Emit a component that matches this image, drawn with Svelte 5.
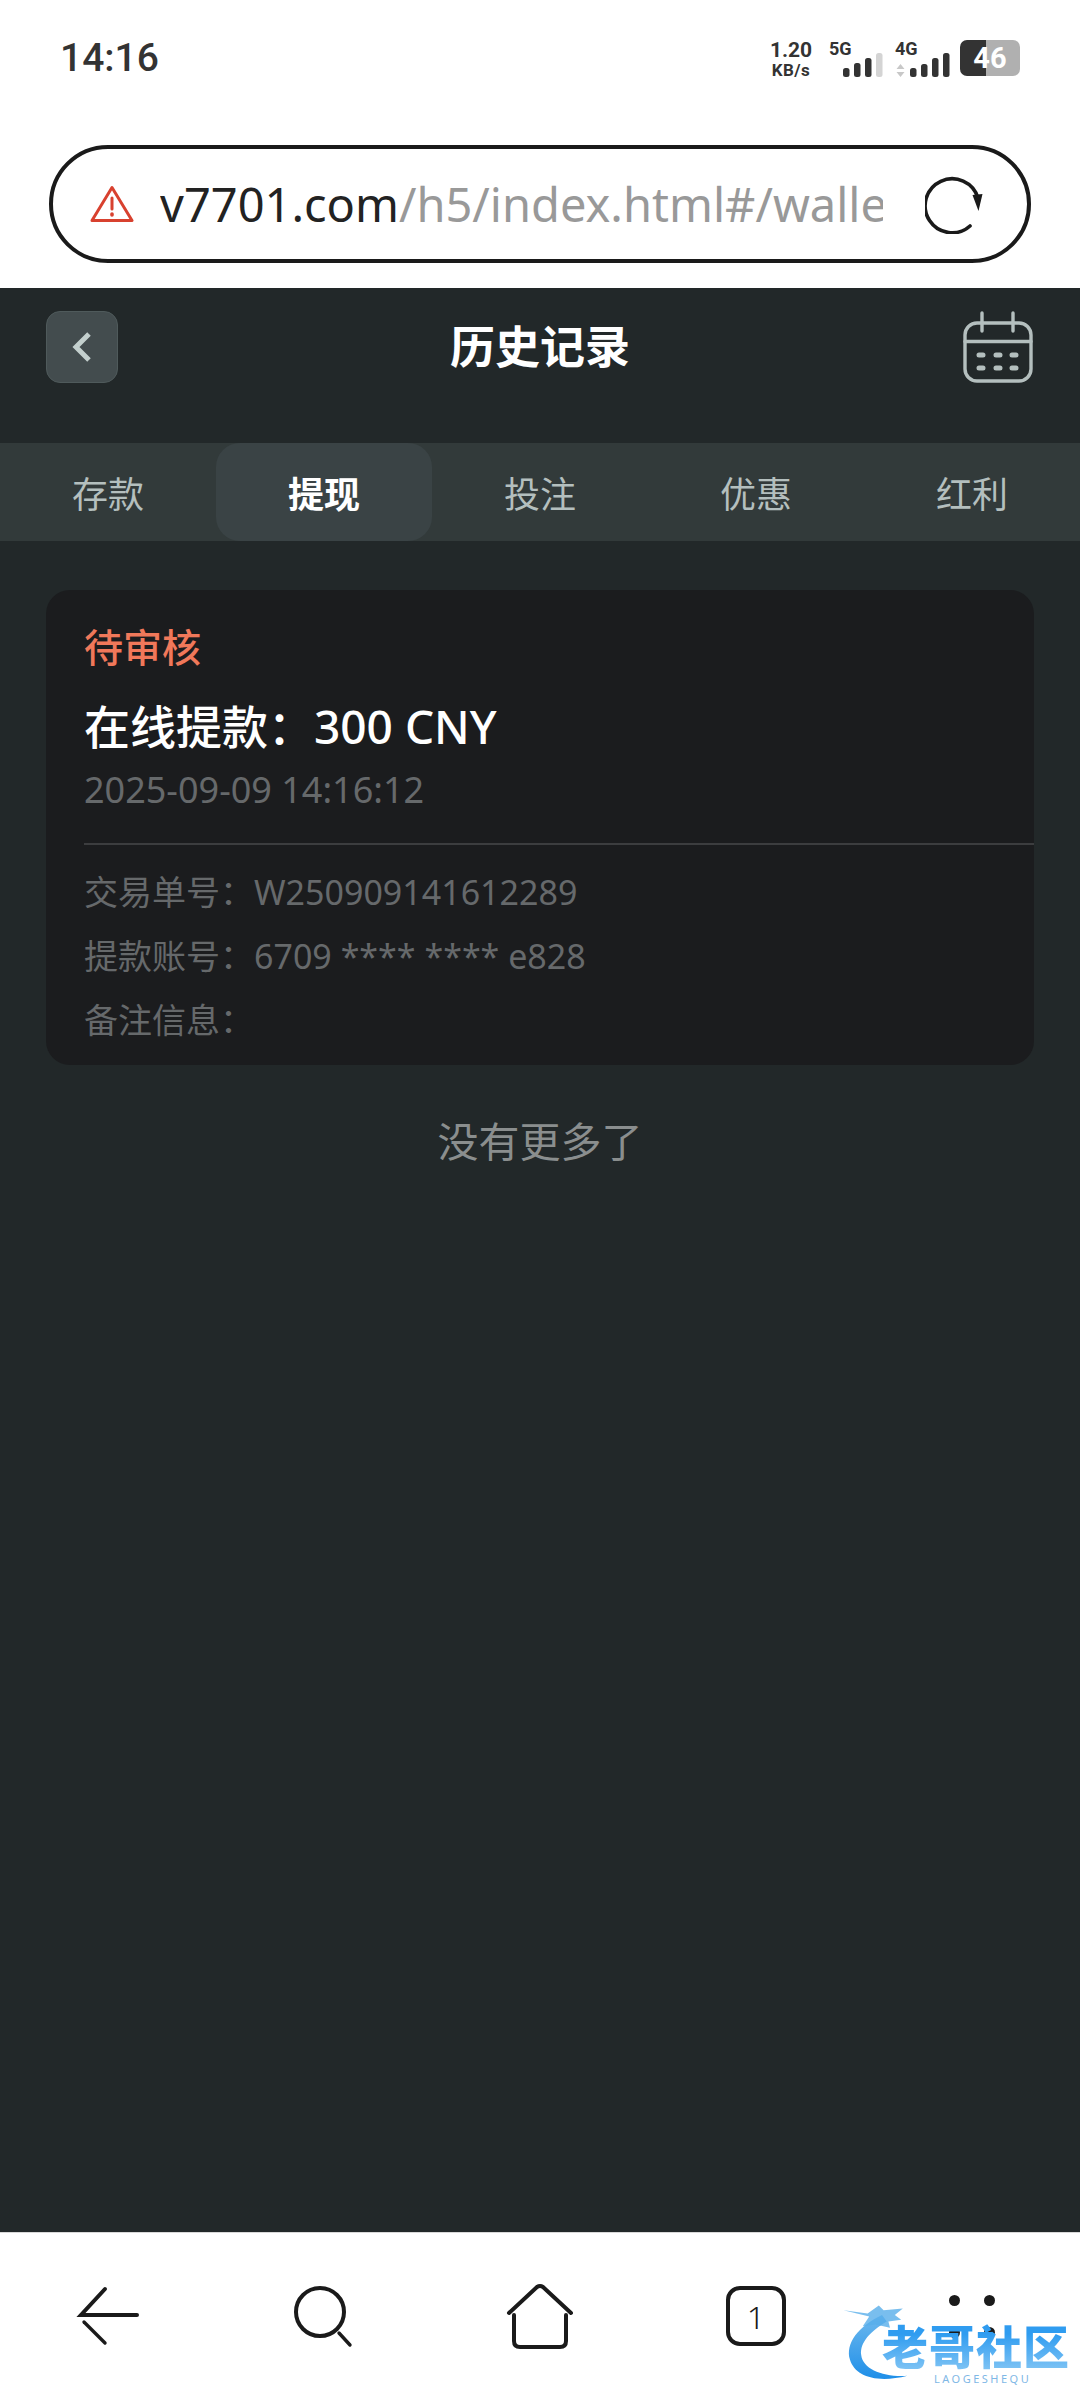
<script>
  const tabs = ["存款", "提现", "投注", "优惠", "红利"];
  const active = 1;
  const rows = [
    { label: "交易单号：", value: "W250909141612289" },
    { label: "提款账号：", value: "6709 **** **** e828" },
    { label: "备注信息：", value: "" },
  ];
  const sim5 = [
    { x: 0, h: 9, on: true },
    { x: 11, h: 14, on: true },
    { x: 22, h: 19, on: true },
    { x: 33, h: 24, on: false },
  ];
  const sim4 = [
    { x: 0, h: 9, on: true },
    { x: 11, h: 13, on: true },
    { x: 22, h: 19, on: true },
    { x: 33, h: 24, on: true },
  ];
</script>

<div class="page">
  <div class="status">
    <span class="time">14:16</span>
    <div class="status-right">
      <div class="speed"><span>1.20</span><span class="unit">KB/s</span></div>
      <div class="sim sim-5">
        <span class="net">5G</span>
        <svg class="bars" viewBox="0 0 40 24" width="40" height="24" aria-hidden="true">
          {#each sim5 as b}
            <rect x={b.x} y={24 - b.h} width="6.5" height={b.h} rx="2.5" fill={b.on ? "#333" : "#d4d4d4"} />
          {/each}
        </svg>
      </div>
      <div class="sim sim-4">
        <span class="net">4G</span>
        <div class="sim-line">
          <svg viewBox="0 0 9 13" width="9" height="13" aria-hidden="true">
            <path d="M4.5 0L8.5 5H.5zM4.5 13L.5 8h8z" fill="#c8c8c8" />
          </svg>
          <svg viewBox="0 0 40 24" width="40" height="24" aria-hidden="true">
            {#each sim4 as b}
              <rect x={b.x} y={24 - b.h} width="6.5" height={b.h} rx="2.5" fill="#333" />
            {/each}
          </svg>
        </div>
      </div>
      <div class="battery"><span>46</span></div>
    </div>
  </div>

  <div class="url-wrap">
    <div class="url">
      <svg class="warn" viewBox="0 0 44 38" width="44" height="38" fill="none" stroke="#d8412f" stroke-width="3" stroke-linejoin="round" stroke-linecap="round" aria-hidden="true">
        <path d="M22 2.5L42 35.5H2z" />
        <path d="M22 13v11" />
        <path d="M22 29v1" stroke-width="3.6" />
      </svg>
      <div class="url-text"><span class="host">v7701.com</span>/h5/index.html#/wallet/history</div>
      <svg class="reload" viewBox="0 0 60 60" width="60" height="60" fill="none" aria-hidden="true">
        <path d="M45 52A27 27 0 1 1 53 24" stroke="#1a1a1a" stroke-width="3.6" stroke-linecap="round" />
        <path d="M57.5 20L53.5 37L47.5 21z" fill="#1a1a1a" />
      </svg>
    </div>
  </div>

  <main class="app">
    <header class="head">
      <button class="back" type="button" aria-label="返回">
        <svg viewBox="0 0 22 32" width="22" height="32" fill="none" stroke="#c3cfcd" stroke-width="5" aria-hidden="true">
          <path d="M18 3L5 16l13 13" />
        </svg>
      </button>
      <h1>历史记录</h1>
      <svg class="cal" viewBox="0 0 72 72" width="72" height="72" fill="none" stroke="#b4bfbe" stroke-width="3.4" stroke-linecap="round" aria-hidden="true">
        <rect x="3" y="12" width="66" height="58" rx="12" />
        <path d="M3 30.500h66M20 2v18M51 2v18" />
        <g stroke-width="5">
          <path d="M17 44h4M34 44h4M50 44h4M17 57h4M34 57h4M50 57h4" />
        </g>
      </svg>
    </header>

    <nav class="tabs">
      {#each tabs as t, i}
        <div class="tab" class:active={i === active}>{t}</div>
      {/each}
    </nav>

    <div class="list">
      <section class="card">
        <div class="state">待审核</div>
        <div class="amount">在线提款：300 CNY</div>
        <div class="date">2025-09-09 14:16:12</div>
        <div class="rows">
          {#each rows as r}
            <div class="row">{r.label}{r.value}</div>
          {/each}
        </div>
      </section>
      <p class="end">没有更多了</p>
    </div>
  </main>

  <footer class="bottom">
    <svg viewBox="0 0 64 64" width="64" height="64" fill="none" stroke="#1a1a1a" stroke-width="4" stroke-linecap="round" aria-hidden="true">
      <path d="M29 5L5 31h56" />
      <path d="M8 38l21 21" stroke-width="3.4" />
    </svg>
    <svg viewBox="0 0 64 64" width="64" height="64" fill="none" stroke="#1a1a1a" stroke-width="4" stroke-linecap="round" aria-hidden="true">
      <circle cx="28" cy="28" r="24" />
      <path d="M47 49l11 12" stroke-width="3.4" />
    </svg>
    <svg viewBox="0 0 68 68" width="68" height="68" fill="none" stroke="#1a1a1a" stroke-width="4" stroke-linecap="round" stroke-linejoin="round" aria-hidden="true">
      <path d="M3 31L31 5q3-2 6 0l28 26" />
      <path d="M8 33v26q0 6 6 6h40q6 0 6-6V33" />
    </svg>
    <div class="tab-count"><span>1</span></div>
    <div class="more" aria-hidden="true"><i></i><i></i><i></i><i></i></div>
  </footer>

  <div class="mark" aria-hidden="true">
    <svg viewBox="0 0 120 112" width="120" height="112" fill="none">
      <defs>
        <linearGradient id="drg" x1="0" y1="0" x2="0" y2="1">
          <stop offset="0" stop-color="#6fb9ee" />
          <stop offset="1" stop-color="#1f8fe8" />
        </linearGradient>
      </defs>
      <path d="M50 16C20 30 4 52 10 72c6 20 32 30 72 20C52 94 26 84 24 66 22 50 36 36 56 24z" fill="url(#drg)" />
      <path d="M2 10l30 4 14-10 6 6 24-2-10 8 8 6-16 2 2 8-18-4-16 2 8-12z" fill="#58aeea" opacity=".8" />
    </svg>
    <div class="mark-name">老哥社区</div>
    <div class="mark-sub">LAOGESHEQU</div>
  </div>
</div>

<style>
  :global(body) {
    margin: 0;
    background: #fff;
  }

  .page {
    position: relative;
    display: flex;
    flex-direction: column;
    width: 1080px;
    height: 2400px;
    overflow: hidden;
    font-family: "Noto Sans", "Noto Sans CJK SC", sans-serif;
  }

  .status {
    display: flex;
    align-items: center;
    justify-content: space-between;
    height: 116px;
    padding: 0 60px;
    box-sizing: border-box;
    padding-right: 60px;
    color: #333;
  }

  .time {
    font-family: Roboto, sans-serif;
    font-size: 39px;
    font-weight: 500;
    letter-spacing: 0;
  }

  .status-right {
    display: flex;
    align-items: flex-start;
    height: 37px;
  }

  .speed {
    display: flex;
    flex-direction: column;
    align-items: center;
    width: 44px;
    font-family: Roboto, sans-serif;
    font-size: 21px;
    font-weight: 700;
    line-height: 21px;
  }

  .speed .unit {
    font-size: 17px;
    line-height: 19px;
    letter-spacing: 0.5px;
  }

  .sim {
    position: relative;
    height: 36px;
  }

  .net {
    position: absolute;
    left: 0;
    top: 0;
    font-family: Roboto, sans-serif;
    font-size: 18px;
    font-weight: 700;
    line-height: 18px;
  }

  .sim-5 {
    width: 55px;
    margin-left: 16px;
  }

  .sim-5 .bars {
    position: absolute;
    left: 14px;
    bottom: -1px;
  }

  .sim-4 {
    width: 54px;
    margin-left: 11px;
  }

  .sim-line {
    position: absolute;
    left: 1px;
    bottom: -1px;
    display: flex;
    align-items: flex-end;
    gap: 5px;
  }

  .battery {
    display: flex;
    align-items: center;
    justify-content: center;
    width: 60px;
    height: 36px;
    margin-left: 11px;
    border-radius: 7px;
    background: linear-gradient(90deg, #333 0 43%, #b0b0b0 43%);
    color: #fff;
    font-family: Roboto, sans-serif;
    font-size: 29px;
    font-weight: 700;
  }

  .url-wrap {
    padding: 29px 49px 25px;
  }

  .url {
    display: flex;
    align-items: center;
    height: 118px;
    box-sizing: border-box;
    padding: 0 42px 0 37px;
    border: 4px solid #1a1a1a;
    border-radius: 59px;
  }

  .warn {
    flex: none;
    margin-right: 26px;
  }

  .url-text {
    flex: 1;
    overflow: hidden;
    white-space: nowrap;
    color: #999;
    font-size: 47px;
    line-height: 60px;
  }

  .host {
    color: #222;
  }

  .reload {
    flex: none;
    margin-left: 42px;
  }

  .app {
    flex: 1;
    min-height: 0;
    background: #222829;
  }

  .head {
    display: flex;
    align-items: center;
    justify-content: space-between;
    height: 155px;
    box-sizing: border-box;
    padding: 0 46px 38px;
  }

  .back {
    display: flex;
    align-items: center;
    justify-content: center;
    width: 72px;
    height: 72px;
    padding: 0;
    border: 1px solid #4f5a5b;
    border-radius: 14px;
    background: #434c4e;
  }

  h1 {
    margin: 0;
    color: #fff;
    font-size: 45px;
    font-weight: 700;
    line-height: 60px;
  }

  .cal {
    flex: none;
  }

  .tabs {
    display: grid;
    grid-template-columns: repeat(5, 216px);
    height: 98px;
    background: #323a3a;
  }

  .tab {
    display: flex;
    align-items: center;
    justify-content: center;
    border-radius: 24px;
    color: #b4bfbe;
    font-size: 36px;
  }

  .tab.active {
    background: #3a4345;
    color: #fff;
    font-weight: 700;
  }

  .list {
    padding: 49px 46px 0;
  }

  .card {
    height: 475px;
    box-sizing: border-box;
    padding: 30px 0 0 38px;
    border-radius: 24px;
    background: #1b1c1e;
  }

  .state {
    color: #f0785a;
    font-size: 39px;
    font-weight: 500;
    line-height: 54px;
  }

  .amount {
    margin-top: 22px;
    color: #fff;
    font-size: 46px;
    font-weight: 500;
    line-height: 60px;
  }

  .date {
    margin-top: 10px;
    color: #66696b;
    font-size: 36px;
    line-height: 48px;
  }

  .rows {
    margin-top: 29px;
    padding-top: 15px;
    border-top: 2px solid #3c3d3f;
  }

  .row {
    height: 64px;
    color: #66696b;
    font-size: 34px;
    line-height: 64px;
    white-space: nowrap;
  }

  .end {
    margin: 49px 0 0;
    color: #8a8e8e;
    font-size: 41px;
    line-height: 54px;
    text-align: center;
  }

  .bottom {
    display: grid;
    grid-template-columns: repeat(5, 216px);
    align-items: center;
    justify-items: center;
    height: 168px;
    box-sizing: border-box;
    padding-bottom: 1px;
    border-top: 1px solid #d8d8d8;
    background: #fff;
  }

  .tab-count {
    display: flex;
    align-items: center;
    justify-content: center;
    width: 60px;
    height: 60px;
    box-sizing: border-box;
    border: 4px solid #1a1a1a;
    border-radius: 14px;
    color: #1a1a1a;
    font-family: "Noto Sans", sans-serif;
    font-size: 32px;
    font-weight: 300;
  }

  .more {
    display: grid;
    grid-template-columns: repeat(2, 11px);
    gap: 21px 24px;
  }

  .more i {
    width: 11px;
    height: 11px;
    border-radius: 50%;
    background: #1a1a1a;
  }

  /* forum watermark pasted over the screenshot */
  .mark {
    position: absolute;
    left: 842px;
    top: 2302px;
    width: 230px;
    height: 88px;
  }

  .mark svg {
    position: absolute;
    left: 0;
    top: 0;
    width: 96px;
    height: 90px;
  }

  .mark-name {
    position: absolute;
    left: 40px;
    top: 14px;
    background: linear-gradient(180deg, #2f9cf0 30%, #8ccaf5 100%);
    -webkit-background-clip: text;
    background-clip: text;
    color: transparent;
    font-size: 46px;
    font-weight: 900;
    letter-spacing: 1px;
    line-height: 60px;
    white-space: nowrap;
  }

  .mark-sub {
    position: absolute;
    left: 92px;
    top: 70px;
    color: #7fb8e6;
    font-size: 11px;
    letter-spacing: 2.5px;
    line-height: 14px;
  }
</style>
